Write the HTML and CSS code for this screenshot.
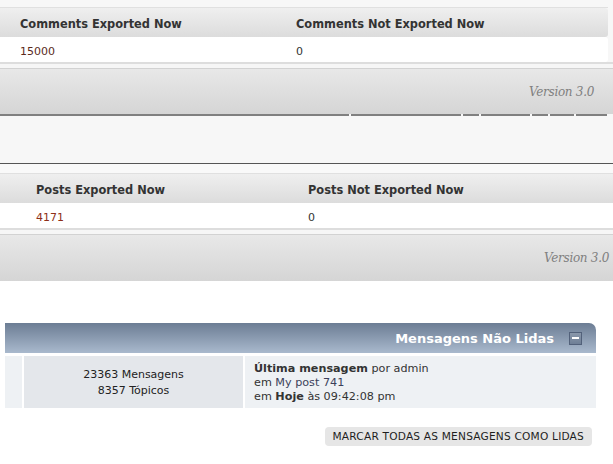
FILE: index.html
```html
<!DOCTYPE html>
<html>
<head>
<meta charset="utf-8">
<link rel="stylesheet" href="styles.css">
</head>
<body>
<div class="top">
  <div class="gap7"></div>
  <div class="tbl t1">
    <div class="row head"><div class="c1">Comments Exported Now</div><div>Comments Not Exported Now</div></div>
    <div class="row data"><div class="c1 num">15000</div><div>0</div></div>
  </div>
  <div class="sep"></div>
  <div class="foot"><span class="ver">Version 3.0</span></div>
  <div class="tabs">
    <span class="seg seg1"></span>
    <span class="seg seg2"></span>
    <span class="seg seg3"></span>
    <span class="seg seg4"></span>
    <span class="seg seg3"></span>
    <span class="seg seg5"></span>
    <span class="seg seg6"></span>
  </div>
  <div class="blank"></div>
</div>
<div class="second">
  <div class="gap9"></div>
  <div class="tbl t2">
    <div class="row head"><div class="c1">Posts Exported Now</div><div>Posts Not Exported Now</div></div>
    <div class="row data"><div class="c1 num red">4171</div><div>0</div></div>
  </div>
  <div class="sep"></div>
  <div class="foot foot2"><span class="ver">Version 3.0</span></div>
</div>
<div class="forum">
  <div class="fhead">
    <span class="ftitle">Mensagens Não Lidas</span>
    <span class="collapse"><span class="bar"></span></span>
  </div>
  <div class="frow">
    <div class="fcell ficon"></div>
    <div class="fcell fstats">23363 Mensagens<br>8357 Tópicos</div>
    <div class="fcell flast"><b>Última mensagem</b> por admin<br>em <span class="lnk">My post 741</span><br>em <b>Hoje</b> às 09:42:08 pm</div>
  </div>
  <div class="actions"><span class="btn">MARCAR TODAS AS MENSAGENS COMO LIDAS</span></div>
</div>
</body>
</html>
```
FILE: styles.css
```css
html, body {
  margin: 0;
  padding: 0;
  background: #ffffff;
  font-family: "DejaVu Sans", Verdana, sans-serif;
  font-size: 11px;
  color: #333;
}
.top {
  background: #f7f7f7;
}
.gap7 { height: 7px; }
.tbl {
  border-top: 1px solid #e0e0e0;
}
.t1 { margin-right: 5px; }
.row {
  display: flex;
  align-items: center;
}
.head {
  height: 29px;
  padding-top: 2px;
  box-sizing: border-box;
  background: linear-gradient(#efefef, #dcdcdc);
  font-weight: bold;
  font-size: 11.4px;
  color: #333;
}
.data {
  height: 25px;
  padding-top: 4px;
  box-sizing: border-box;
  background: #fff;
  color: #333;
}
.t1 .row { padding-left: 20px; }
.t1 .c1 { width: 276px; }
.t1 .head, .t1 .data { border-top-right-radius: 3px; border-bottom-right-radius: 3px; }
.t2 .row { padding-left: 36px; }
.t2 .c1 { width: 272px; }
.num { color: #5b2a1c; }
.num.red { color: #8e2f18; }
.sep {
  height: 4px;
  border-top: 2px solid #dddddd;
  border-bottom: 1px solid #d2d2d2;
  background: #f6f6f6;
}
.foot {
  height: 45px;
  background: linear-gradient(#e8e8e8, #d5d5d5);
  display: flex;
  align-items: center;
  justify-content: flex-end;
  padding-right: 19px;
}
.foot2 { padding-right: 4px; height: 46px; }
.ver {
  font-family: "DejaVu Serif", Georgia, serif;
  font-style: italic;
  font-size: 12px;
  color: #808080;
  letter-spacing: -0.3px;
}
.tabs {
  display: flex;
  gap: 2px;
  height: 2px;
  align-items: flex-start;
}
.seg {
  display: block;
  flex: none;
  height: 2px;
  background: #808080;
}
.seg1 { width: 349px; }
.seg2 { width: 110px; }
.seg3 { width: 16px; }
.seg4 { width: 49px; }
.seg5 { width: 24px; }
.seg6 { width: 31px; }
.blank {
  height: 47px;
  border-bottom: 1px solid #555;
}
.second {
  background: #f9f9f9;
}
.gap9 { height: 9px; }
.forum {
  padding: 42px 17px 0 5px;
  background: #fff;
}
.fhead {
  height: 30px;
  background: linear-gradient(#6c7d94, #a9b9cd);
  border-top-right-radius: 7px;
  display: flex;
  align-items: center;
  justify-content: flex-end;
  padding-right: 14px;
}
.ftitle {
  color: #fff;
  font-weight: bold;
  font-size: 13px;
  margin-right: 15px;
}
.collapse {
  width: 11px;
  height: 11px;
  border: 1px solid #52617a;
  background: linear-gradient(#8a98ab, #6f7f96);
  display: flex;
  align-items: center;
  justify-content: center;
}
.collapse .bar {
  width: 7px;
  height: 2px;
  background: #fff;
}
.frow {
  display: flex;
  gap: 2px;
  margin-top: 3px;
  height: 52px;
}
.fcell { background: #eef1f4; }
.ficon { width: 17px; }
.fstats {
  width: 219px;
  background: #e4e7eb;
  text-align: center;
  line-height: 16px;
  padding-top: 11px;
  color: #222;
}
.flast {
  flex: 1;
  padding: 6px 0 0 9px;
  line-height: 14px;
  color: #333;
  font-size: 11.2px;
}
.flast b { color: #333; }
.lnk { color: #3a3f5a; }
.actions {
  display: flex;
  justify-content: flex-end;
  margin-top: 19px;
  padding-right: 4px;
}
.btn {
  background: #e6e6e6;
  border-radius: 4px;
  height: 19px;
  line-height: 19px;
  padding: 0 8px;
  font-size: 10.6px;
  color: #1e1e1e;
  letter-spacing: 0.2px;
}
```
